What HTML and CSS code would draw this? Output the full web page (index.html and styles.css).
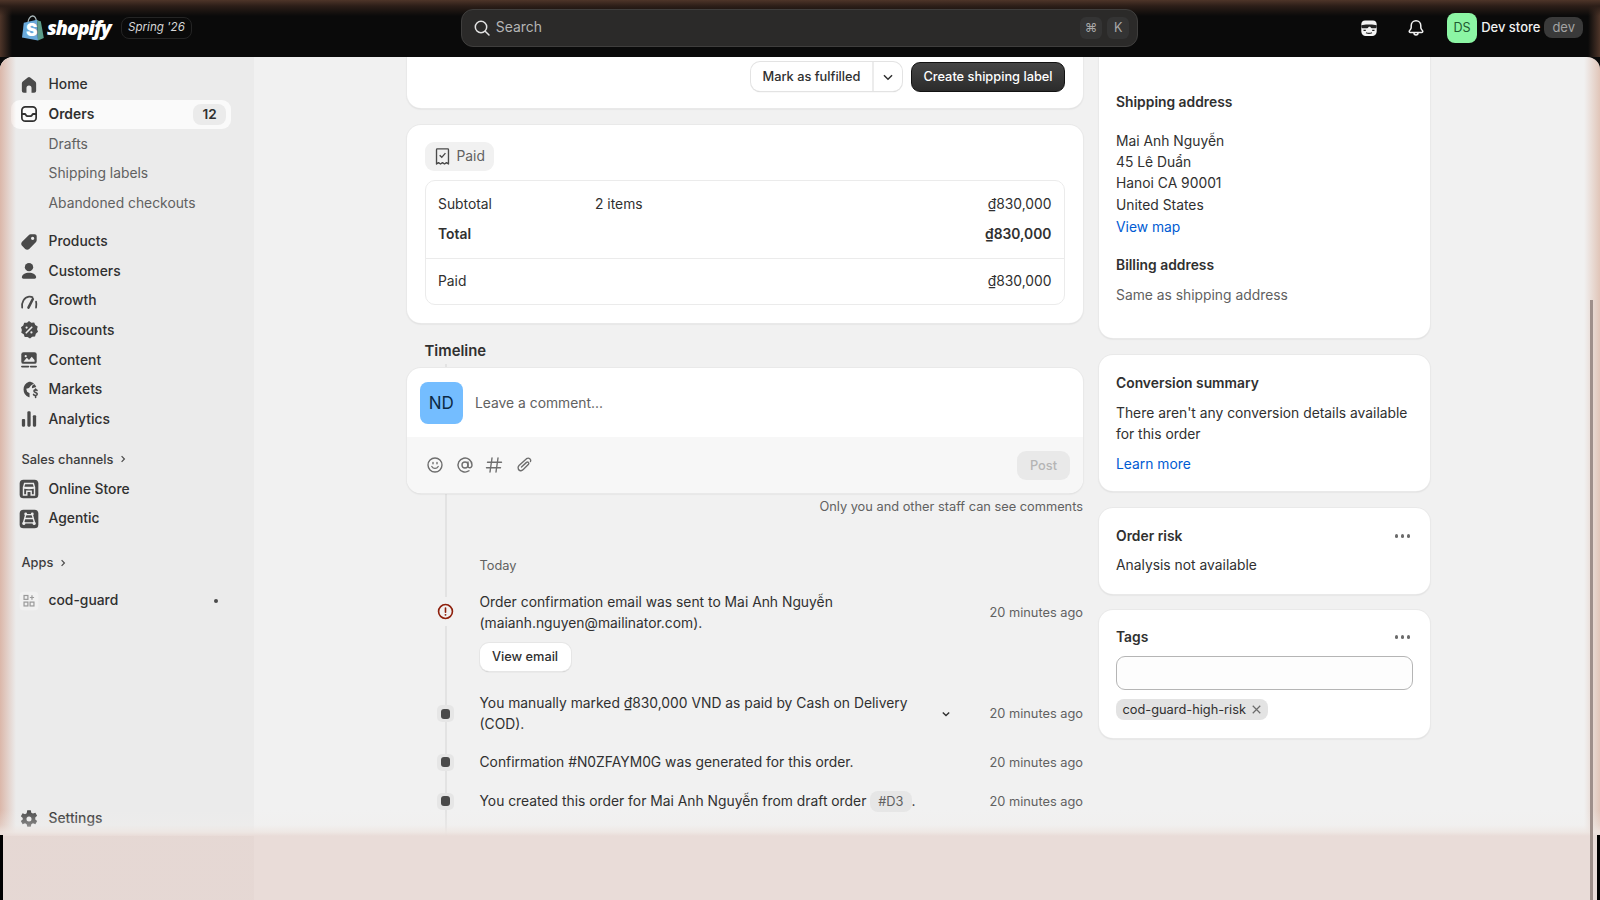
FILE: index.html
```html
<!DOCTYPE html>
<html lang="en">
<head>
  <meta charset="UTF-8">
  <meta name="viewport" content="width=device-width, initial-scale=1.0">
  <title>Order - Shopify</title>
  <link rel="stylesheet" href="styles.css">
</head>
<body>
  <header class="topbar">
    <div class="brand">
      <svg class="bag" viewBox="0 0 22 26" width="22" height="26">
        <path d="M6 8c0-3.500 2-6.800 4.500-7 2.200-.2 3.600 2.200 3.900 5.500" fill="none" stroke="#a9b6b8" stroke-width="1.300"/>
        <path d="M1.800 7.800 15 4.800 16 25.500 0 22.500z" fill="#6aa9da"/>
        <path d="M15 4.800l2 1.200 1.800.2L21.800 23 16 25.500z" fill="#5c9c8a"/>
        <text class="bag-s" x="4" y="20.500">S</text>
      </svg>
      <span class="wordmark">shopify</span>
      <span class="release">Spring '26</span>
    </div>
    <div class="search">
      <svg class="ic" viewBox="0 0 20 20" width="20" height="20"><circle cx="9" cy="9" r="5.700" fill="none" stroke="#e3e3e3" stroke-width="1.500"/><path d="M13.200 13.200 17 17" stroke="#e3e3e3" stroke-width="1.500" stroke-linecap="round"/></svg>
      <span class="search-text">Search</span>
      <span class="key">⌘</span>
      <span class="key">K</span>
    </div>
    <div class="top-actions">
      <svg class="mask" viewBox="0 0 20 20" width="20" height="20">
        <path d="M6 2.500h8c2.200 0 3.700 1.500 3.700 3.700v7.300c0 2.500-2 4.500-4.500 4.500H6.800c-2.500 0-4.500-2-4.500-4.500V6.200C2.300 4 3.800 2.500 6 2.500z" fill="#f4f4f4"/>
        <path d="M2.300 7.300l4.700-.8h6l4.700.8v1.400c0 .9-1 1.600-2 1.600h-2.200c-1 0-1.700-.5-2.100-1.300-.4-.4-1.400-.4-1.800 0-.4.800-1.100 1.300-2.100 1.300H4.300c-1 0-2-.7-2-1.600z" fill="#242424"/>
        <path d="M4.500 12.300h2.300M13.200 12.300h2.300M7 14.800c2 .8 4 .8 6 0" stroke="#242424" stroke-width="1.200" fill="none"/>
      </svg>
      <svg class="bell" viewBox="0 0 20 20" width="20" height="20" fill="none" stroke="#f1f1f1" stroke-width="1.500" stroke-linejoin="round">
        <path d="M10 2.800c-2.900 0-4.800 2.300-4.800 5v1.700c0 1.300-1.100 2.300-1.800 3.300-.5.800 0 1.700 1 1.700h11.200c1 0 1.500-.9 1-1.700-.7-1-1.800-2-1.800-3.300V7.800c0-2.700-1.900-5-4.800-5z"/>
        <path d="M8 15c0 2.500 4 2.500 4 0"/>
      </svg>
      <div class="store">
        <span class="store-avatar">DS</span>
        <span class="store-name">Dev store</span>
        <span class="store-tag">dev</span>
      </div>
    </div>
  </header>

  <div class="frame">
    <nav class="sidebar">
      <a class="nav-row"><svg class="ic" viewBox="0 0 20 20"><path d="M8.900 3.100a1.800 1.800 0 0 1 2.200 0l4.300 3.500c.7.500 1.100 1.300 1.100 2.200v6.400c0 1-.8 1.800-1.800 1.800h-2.400v-4.200a2.300 2.300 0 0 0-4.600 0V17H5.300c-1 0-1.800-.8-1.800-1.800V8.800c0-.9.400-1.700 1.100-2.200z"/></svg>Home</a>
      <a class="nav-row is-active"><svg class="ic ic-line" viewBox="0 0 20 20"><rect x="3.500" y="3.500" width="13" height="13" rx="3.200"/><path d="M3.500 10h2.400c.6 0 1 .3 1.200.8.300.8 1 1.200 1.700 1.200h2.400c.7 0 1.400-.4 1.700-1.200.2-.5.600-.8 1.200-.8h2.400"/></svg>Orders<span class="count">12</span></a>
      <a class="nav-row nav-sub">Drafts</a>
      <a class="nav-row nav-sub">Shipping labels</a>
      <a class="nav-row nav-sub">Abandoned checkouts</a>

      <a class="nav-row gap-s"><svg class="ic" viewBox="0 0 20 20"><path d="M11.500 3h3.700C16.200 3 17 3.800 17 4.800v3.700c0 .7-.3 1.300-.8 1.800l-6 6c-1 1-2.700 1-3.700 0l-2.800-2.800c-1-1-1-2.700 0-3.700l6-6c.5-.5 1.100-.8 1.800-.8zm1.800 2.200a1.500 1.500 0 1 0 0 3 1.500 1.500 0 0 0 0-3z" fill-rule="evenodd"/></svg>Products</a>
      <a class="nav-row"><svg class="ic" viewBox="0 0 20 20"><circle cx="10" cy="6.500" r="3.800"/><path d="M10 11.500c-3.600 0-6.500 1.800-6.500 4.200 0 .8.600 1.300 1.400 1.300h10.200c.8 0 1.400-.5 1.400-1.300 0-2.400-2.900-4.200-6.500-4.200z"/></svg>Customers</a>
      <a class="nav-row"><svg class="ic ic-line" viewBox="0 0 20 20"><path d="M3.800 16c-.8-4.600 1.800-9.600 6.200-10 1.200-.1 2.400.1 3.200.6"/><path d="M16.400 10.500c.5 1.900.4 3.800 0 5.500"/><path d="M9.500 16 13.500 8.200" stroke-width="2.300"/></svg>Growth</a>
      <a class="nav-row"><svg class="ic" viewBox="0 0 20 20"><path d="M10 1.800l2.100 1.500 2.600-.2 1 2.400 2.200 1.300-.6 2.500.9 2.400-2 1.700-.7 2.500-2.600.2-2 1.700-2.200-1.400-2.600-.1-.9-2.400-2.200-1.500.5-2.500-.8-2.500 2.100-1.500.8-2.500 2.600-.1z"/><path d="M7.500 12.500l5-5" stroke="#ebebeb" stroke-width="1.500" stroke-linecap="round"/><circle cx="7.800" cy="7.800" r="1" fill="#ebebeb"/><circle cx="12.200" cy="12.200" r="1" fill="#ebebeb"/></svg>Discounts</a>
      <a class="nav-row"><svg class="ic" viewBox="0 0 20 20"><rect x="3" y="3" width="14" height="10.500" rx="2"/><path d="M5 11.500 8 8l2 2 2.500-3 2.500 3v1.500z" fill="#ebebeb"/><circle cx="7" cy="6.500" r="1" fill="#ebebeb"/><path d="M3.500 16h6M11.500 16h5" stroke="#4a4a4a" stroke-width="1.500" stroke-linecap="round"/></svg>Content</a>
      <a class="nav-row"><svg class="ic" viewBox="0 0 20 20"><path d="M10 2.500c1.700 0 3.300.6 4.500 1.600l-2.700 1.700-1.800 2.400-2.500.6.800 2.700 2.200 1.500v3.500c-.2 0-.3.100-.5.100a7.500 7.500 0 0 1 0-14.100z"/><path d="M14.800 4.600c.8.800 1.400 1.700 1.800 2.700l-3.800 1.200c-.3-1-.1-1.900.4-2.600z"/><path d="M17.300 10.500c-.3-.9-2.800-1-2.800.5s3 1 3 2.700-2.900 1.600-3.400.3M16 9v1.300M16 15.300v1.500" fill="none" stroke="#4a4a4a" stroke-width="1.400" stroke-linecap="round"/></svg>Markets</a>
      <a class="nav-row"><svg class="ic" viewBox="0 0 20 20"><rect x="3.500" y="10" width="3" height="7" rx="1"/><rect x="8.500" y="3" width="3" height="14" rx="1"/><rect x="13.500" y="6.500" width="3" height="10.500" rx="1"/></svg>Analytics</a>

      <div class="nav-head first">Sales channels<svg viewBox="0 0 20 20" width="14" height="14" fill="none" stroke="#4a4a4a" stroke-width="1.700"><path d="M8 6l4 4-4 4"/></svg></div>
      <a class="nav-row"><svg class="ic tile" viewBox="0 0 20 20"><rect x="1.500" y="1.500" width="17" height="17" rx="3.500"/><path d="M5 8.500 6 5h8l1 3.500M5 8.500h10v7h-3v-3.500H8v3.500H5zM5 8.500c0 1.500 10 1.500 10 0" fill="none" stroke="#ebebeb" stroke-width="1.300"/></svg>Online Store</a>
      <a class="nav-row"><svg class="ic tile" viewBox="0 0 20 20"><rect x="1.500" y="1.500" width="17" height="17" rx="3.500"/><path d="M7 6h6l2 7.500H5zM6 9.500h8" fill="none" stroke="#ebebeb" stroke-width="1.300"/><circle cx="7" cy="5.500" r="1.300" fill="#ebebeb"/><circle cx="13" cy="5.500" r="1.300" fill="#ebebeb"/><circle cx="5.300" cy="14" r="1.400" fill="#ebebeb"/><circle cx="14.700" cy="14" r="1.400" fill="#ebebeb"/></svg>Agentic</a>

      <div class="nav-head second">Apps<svg viewBox="0 0 20 20" width="14" height="14" fill="none" stroke="#4a4a4a" stroke-width="1.700"><path d="M8 6l4 4-4 4"/></svg></div>
      <a class="nav-row app-row"><svg class="ic tile" viewBox="0 0 20 20"><rect x="1.500" y="1.500" width="17" height="17" rx="3.500" fill="#f1f1f1"/><g fill="none" stroke="#9a9a9a" stroke-width="1.100"><rect x="5.500" y="5" width="3.500" height="3.500"/><rect x="5.500" y="11" width="3.500" height="3.500"/><rect x="11" y="11" width="3.500" height="3.500"/><path d="M12.700 4.800v4M10.800 6.800h3.800"/></g></svg>cod-guard<span class="app-dot"></span></a>

      <a class="nav-row settings"><svg class="ic" viewBox="0 0 20 20"><path d="M8.400 2h3.200l.5 2.300 1.500.8 2.200-.8 1.600 2.800-1.700 1.500v1.800l1.700 1.500-1.600 2.800-2.200-.8-1.500.8-.5 2.300H8.400l-.5-2.300-1.500-.8-2.200.8-1.600-2.800 1.700-1.500V9.100L2.600 7.600l1.600-2.800 2.200.8 1.500-.8z"/><circle cx="10" cy="10" r="2.300" fill="#ebebeb"/></svg>Settings</a>
    </nav>

    <main class="content">
      <div class="col-main">
        <section class="card card-cut fulfil-card">
          <div class="btn-split">
            <span class="btn-part">Mark as fulfilled</span>
            <span class="btn-caret"><svg viewBox="0 0 20 20" width="18" height="18" fill="none" stroke="#303030" stroke-width="1.600"><path d="M5.500 8l4.500 4.500L14.500 8"/></svg></span>
          </div>
          <span class="btn-dark">Create shipping label</span>
        </section>

        <section class="card paid-card">
          <span class="paid-badge">
            <svg viewBox="0 0 20 20" width="21" height="21" fill="none" stroke="#4a4a4a" stroke-width="1.300"><path d="M5 2.800h10c.4 0 .7.300.7.700v13.700l-1.900-1.400-1.900 1.400-1.900-1.400-1.900 1.400-1.900-1.400-1.900 1.400V3.500c0-.4.300-.7.700-.7z" stroke-linejoin="round"/><path d="M7.300 8.800l2 2 3.500-4"/></svg>
            Paid
          </span>
          <div class="summary">
            <div class="sum-row"><span class="sum-label">Subtotal</span><span>2 items</span><span class="sum-val">₫830,000</span></div>
            <div class="sum-row strong"><span class="sum-label">Total</span><span></span><span class="sum-val">₫830,000</span></div>
            <div class="sum-row paid-row"><span class="sum-label">Paid</span><span></span><span class="sum-val">₫830,000</span></div>
          </div>
        </section>

        <h2 class="tl-title">Timeline</h2>

        <div class="timeline">
          <section class="card comment-card">
            <div class="comment-top">
              <span class="user-avatar">ND</span>
              <span class="comment-hint">Leave a comment...</span>
            </div>
            <div class="comment-bar">
              <svg class="tool" viewBox="0 0 20 20"><circle cx="10" cy="10" r="7"/><path d="M6.800 11.500c1.500 2.500 4.900 2.500 6.400 0"/><path d="M8 7.500v1.300M12 7.500v1.300"/></svg>
              <svg class="tool" viewBox="0 0 20 20"><circle cx="10" cy="10" r="3"/><path d="M13 7v4.300c0 2.300 4 2 4-1.300a7 7 0 1 0-3 5.800"/></svg>
              <svg class="tool" viewBox="0 0 20 20"><path d="M8 3l-2 14M14 3l-2 14M3.500 7.300h14M2.500 12.700h14"/></svg>
              <svg class="tool" viewBox="0 0 20 20"><path d="M16.500 6.500c1-2-1.500-4.500-4-2.800L5 10.500c-2 2-.5 6 2.500 5 .8-.3 1.300-.7 2-1.300l5-5c1-1.200-.5-3-2-1.800L7.500 12"/></svg>
              <span class="post-btn">Post</span>
            </div>
          </section>
          <p class="comment-note">Only you and other staff can see comments</p>

          <p class="tl-day">Today</p>

          <div class="event first-event">
            <div class="marker">
              <svg class="warn" viewBox="0 0 20 20" width="19" height="19" fill="none" stroke="#8e1f0b" stroke-width="1.700"><circle cx="10" cy="10" r="7.300"/><path d="M10 6.300v4.400" stroke-linecap="round"/><circle cx="10" cy="13.500" r="1" fill="#8e1f0b" stroke="none"/></svg>
            </div>
            <div class="event-body">
              <p>Order confirmation email was sent to Mai Anh Nguyễn (maianh.nguyen@mailinator.com).</p>
              <span class="btn-plain">View email</span>
            </div>
            <time class="event-time">20 minutes ago</time>
          </div>

          <div class="event second-event">
            <div class="marker"><span class="dot"></span></div>
            <div class="event-body"><p>You manually marked ₫830,000 VND as paid by Cash on Delivery (COD).</p></div>
            <svg class="event-caret" viewBox="0 0 20 20" width="16" height="16" fill="none" stroke="#303030" stroke-width="1.700"><path d="M6 8l4 4 4-4"/></svg>
            <time class="event-time">20 minutes ago</time>
          </div>

          <div class="event third-event">
            <div class="marker"><span class="dot"></span></div>
            <div class="event-body"><p>Confirmation #N0ZFAYM0G was generated for this order.</p></div>
            <time class="event-time">20 minutes ago</time>
          </div>

          <div class="event fourth-event">
            <div class="marker"><span class="dot"></span></div>
            <div class="event-body"><p class="nowrap">You created this order for Mai Anh Nguyễn from draft order <span class="draft-pill">#D3</span>.</p></div>
            <time class="event-time">20 minutes ago</time>
          </div>
        </div>
      </div>

      <aside class="col-side">
        <section class="card card-cut address-card">
          <h3 class="card-title">Shipping address</h3>
          <p class="address">Mai Anh Nguyễn<br>45 Lê Duẩn<br>Hanoi CA 90001<br>United States</p>
          <a class="link">View map</a>
          <h3 class="card-title billing">Billing address</h3>
          <p class="muted">Same as shipping address</p>
        </section>

        <section class="card pad-card conv-card">
          <h3 class="card-title">Conversion summary</h3>
          <p class="conv-text">There aren't any conversion details available for this order</p>
          <a class="link learn">Learn more</a>
        </section>

        <section class="card pad-card risk-card">
          <div class="title-row"><h3 class="card-title">Order risk</h3><span class="dots"><i></i><i></i><i></i></span></div>
          <p class="risk-text">Analysis not available</p>
        </section>

        <section class="card pad-card tags-card">
          <div class="title-row"><h3 class="card-title">Tags</h3><span class="dots"><i></i><i></i><i></i></span></div>
          <div class="tag-input"></div>
          <span class="tag">cod-guard-high-risk
            <svg viewBox="0 0 20 20" width="15" height="15" fill="none" stroke="#6b6b6b" stroke-width="1.600"><path d="M5 5l10 10M15 5L5 15"/></svg>
          </span>
        </section>
      </aside>
    </main>

    <div class="edge-left"></div>
    <div class="edge-right"></div>
    <div class="scroll-thumb"></div>
    <div class="bottom-haze"></div>
  </div>
</body>
</html>
```

FILE: styles.css
```css
* {
  box-sizing: border-box;
}

body {
  margin: 0;
  height: 100vh;
  display: flex;
  flex-direction: column;
  overflow: hidden;
  background: #0a0a0a;
  color: #303030;
  font-family: Inter, "Noto Sans", sans-serif;
  font-size: 13.85px;
  line-height: 21px;
}

p, h2, h3 {
  margin: 0;
}

/* top bar */
.topbar {
  height: 57px;
  flex: none;
  display: flex;
  align-items: center;
  padding: 0 17px 2px 22px;
  background:
    linear-gradient(to bottom, #4e3529 0, #2c1e18 6px, rgba(10,10,10,0) 16px),
    linear-gradient(to right, #4e3529 0, rgba(10,10,10,0) 12px),
    linear-gradient(to left, #4e3529 0, rgba(10,10,10,0) 12px),
    #0a0a0a;
}

.brand {
  width: 440px;
  display: flex;
  align-items: center;
}

.bag-s {
  font: 900 17px Inter, sans-serif;
  fill: #fff;
}

.wordmark {
  margin-left: 3px;
  width: 65px;
  color: #fff;
  font-family: "Open Sans", sans-serif;
  font-size: 19.5px;
  font-style: italic;
  font-weight: 800;
  letter-spacing: -1px;
}

.release {
  height: 22px;
  margin-left: 9px;
  padding: 0 6px;
  display: flex;
  align-items: center;
  border: 1px solid #242424;
  border-radius: 8px;
  color: #d6d6d6;
  font-size: 11.6px;
  font-style: italic;
}

.search {
  width: 679px;
  height: 38px;
  display: flex;
  align-items: center;
  padding: 0 8px 0 10px;
  gap: 4px;
  background: #2b2a29;
  border: 1px solid #3f3e3d;
  border-radius: 12px;
}

.search-text {
  flex: 1;
  color: #b5b5b5;
  font-size: 13.9px;
}

.key {
  width: 22px;
  height: 22px;
  display: flex;
  align-items: center;
  justify-content: center;
  margin-left: 1px;
  background: #343434;
  border-radius: 6px;
  color: #a8a8a8;
  font-size: 12.6px;
}

.top-actions {
  flex: 1;
  display: flex;
  align-items: center;
}

.mask {
  margin-left: 221px;
}

.bell {
  margin-left: 27px;
}

.store {
  margin-left: 21px;
  display: flex;
  align-items: center;
}

.store-avatar {
  width: 30px;
  height: 30px;
  display: flex;
  align-items: center;
  justify-content: center;
  background: #8cf5a4;
  border-radius: 8px;
  color: #1e5a30;
  font-size: 12.6px;
}

.store-name {
  margin-left: 4px;
  color: #f1f1f1;
  font-weight: 500;
  font-size: 13px;
  white-space: nowrap;
}

.store-tag {
  margin-left: 4px;
  height: 21px;
  padding: 0 8px;
  display: flex;
  align-items: center;
  background: #3a3a3a;
  border-radius: 8px;
  color: #a3a3a3;
  font-size: 13px;
}

/* frame */
.frame {
  position: relative;
  flex: 1;
  min-height: 0;
  display: flex;
  background: #f1f1f1;
  border-radius: 13px 13px 0 0;
  overflow: hidden;
}

.sidebar {
  width: 254px;
  flex: none;
  display: flex;
  flex-direction: column;
  padding: 13px 23px 66.5px 11px;
  background: #ebebeb;
}

.nav-row {
  height: 29.65px;
  flex: none;
  display: flex;
  align-items: center;
  padding-left: 7px;
  border-radius: 9px;
  color: #303030;
  font-weight: 500;
}

.nav-row .ic {
  width: 22px;
  height: 22px;
  margin-right: 8.500px;
  fill: #4a4a4a;
}

.nav-row .ic-line {
  fill: none;
  stroke: #4a4a4a;
  stroke-width: 1.600;
  stroke-linecap: round;
}

.is-active .ic-line {
  stroke: #303030;
}

.is-active {
  background: #fafafa;
  font-weight: 600;
}

.count {
  margin-left: auto;
  margin-right: 5px;
  width: 33px;
  height: 21px;
  display: flex;
  align-items: center;
  justify-content: center;
  background: #ebebeb;
  border-radius: 8px;
  font-size: 13.6px;
}

.nav-sub {
  padding-left: 37.5px;
  color: #616161;
  font-weight: 430;
}

.gap-s {
  margin-top: 8.5px;
}

.nav-head {
  height: 29.6px;
  flex: none;
  display: flex;
  align-items: center;
  gap: 3px;
  padding-left: 10.5px;
  color: #3d3d3d;
  font-size: 12.8px;
  font-weight: 500;
}

.nav-head.first {
  margin-top: 10.5px;
}

.nav-head.second {
  margin-top: 14.3px;
  margin-bottom: 8.4px;
}

.app-dot {
  margin-left: auto;
  margin-right: 13px;
  width: 4px;
  height: 4px;
  background: #4a4a4a;
  border-radius: 50%;
}

.settings {
  margin-top: auto;
}

/* content columns */
.content {
  flex: 1;
  display: grid;
  grid-template-columns: 676px 331px;
  gap: 16px;
  align-content: start;
  padding-left: 153px;
}

.card {
  background: #fff;
  border-radius: 14px;
  box-shadow: 0 0 0 1px #e9e9e9, 0 1px 2px rgba(0,0,0,.14);
}

.card-cut {
  border-radius: 0 0 14px 14px;
}

.fulfil-card {
  height: 51px;
  display: flex;
  justify-content: flex-end;
  gap: 9px;
  padding: 5px 18px 0 0;
}

.btn-split {
  height: 29px;
  display: flex;
  background: #fff;
  border-radius: 9px;
  box-shadow: 0 0 0 1px #e3e3e3, 0 1px 1px rgba(0,0,0,.25);
  font-size: 12.8px;
  font-weight: 500;
}

.btn-part {
  width: 123px;
  display: flex;
  align-items: center;
  justify-content: center;
  border-right: 2px solid #ececec;
}

.btn-caret {
  width: 28px;
  display: flex;
  align-items: center;
  justify-content: center;
}

.btn-dark {
  width: 154px;
  height: 30px;
  padding-bottom: 1px;
  display: flex;
  align-items: center;
  justify-content: center;
  background: linear-gradient(#454545, #2b2b2b);
  border: 1px solid #121212;
  border-radius: 9px;
  color: #fff;
  font-size: 12.8px;
  font-weight: 500;
}

.paid-card {
  margin-top: 17px;
  padding: 17px 18px 18px 17.5px;
}

.paid-badge {
  width: 69px;
  height: 29px;
  display: flex;
  align-items: center;
  gap: 4px;
  padding-left: 7px;
  background: #f1f1f1;
  border-radius: 9px;
  color: #616161;
  font-weight: 430;
}

.summary {
  margin-top: 9px;
  height: 125px;
  padding-top: 9px;
  border: 1px solid #ebebeb;
  border-radius: 10px;
}

.sum-row {
  height: 29.6px;
  display: grid;
  grid-template-columns: 157px 1fr auto;
  align-items: center;
  padding: 0 12.5px;
  font-weight: 430;
}

.sum-row.strong {
  font-weight: 570;
}

.sum-row.paid-row {
  height: 47px;
  margin-top: 8.5px;
  border-top: 1px solid #ebebeb;
}

.tl-title {
  padding: 19px 0 8px 17.5px;
  font-size: 14.9px;
  line-height: 18px;
  font-weight: 600;
}

.timeline {
  position: relative;
}

.timeline::before {
  content: "";
  position: absolute;
  left: 37.5px;
  top: -4px;
  bottom: -30px;
  width: 2px;
  background: #e3e3e3;
}

.comment-card {
  position: relative;
  height: 125px;
  overflow: hidden;
  display: flex;
  flex-direction: column;
}

.comment-top {
  height: 69px;
  flex: none;
  display: flex;
  align-items: center;
  padding: 1px 0 0 13px;
  gap: 12.5px;
}

.user-avatar {
  width: 42.5px;
  height: 42.5px;
  display: flex;
  align-items: center;
  justify-content: center;
  background: #74bdff;
  border-radius: 8px;
  color: #0c2a45;
  font-size: 17px;
}

.comment-hint {
  color: #616161;
}

.comment-bar {
  flex: 1;
  display: flex;
  align-items: center;
  gap: 9.5px;
  padding: 0 13px 0 18px;
  background: #f7f7f7;
}

.tool {
  width: 20px;
  height: 20px;
  fill: none;
  stroke: #6e6e6e;
  stroke-width: 1.400;
  stroke-linecap: round;
}

.post-btn {
  margin-left: auto;
  width: 53px;
  height: 29px;
  display: flex;
  align-items: center;
  justify-content: center;
  background: #e9e9e9;
  border-radius: 9px;
  color: #b5b5b5;
  font-size: 12.8px;
  font-weight: 500;
}

.comment-note {
  position: relative;
  margin-top: 4.5px;
  line-height: 18px;
  text-align: right;
  color: #616161;
  font-size: 12.8px;
  font-weight: 430;
}

.tl-day {
  position: relative;
  margin-top: 41.5px;
  padding-left: 72.5px;
  line-height: 18px;
  color: #616161;
  font-size: 12.8px;
}

.event {
  position: relative;
  display: flex;
  align-items: flex-start;
}

.first-event {
  margin-top: 17px;
}

.second-event {
  margin-top: 22px;
}

.third-event {
  margin-top: 17px;
}

.fourth-event {
  margin-top: 18px;
}

.marker {
  width: 72.5px;
  flex: none;
  height: 42px;
  display: flex;
  align-items: center;
  padding-left: 29px;
}

.first-event .marker {
  margin-top: -2px;
}

.first-event .event-time {
  margin-top: -1px;
}

.third-event .marker,
.fourth-event .marker {
  height: 21px;
}

.warn {
  background: #f1f1f1;
  box-shadow: 0 -5px 0 #f1f1f1, 0 5px 0 #f1f1f1;
}

.dot {
  width: 17px;
  height: 17px;
  margin-left: 1px;
  display: flex;
  align-items: center;
  justify-content: center;
  background: #e6e6e6;
  border-radius: 5px;
}

.dot::after {
  content: "";
  width: 9px;
  height: 10px;
  background: #4a4a4a;
  border-radius: 3px;
}

.event-body {
  width: 458px;
  flex: none;
  font-weight: 430;
}

.event-caret {
  margin-top: 13px;
}

.event-time {
  margin-left: auto;
  height: 42px;
  display: flex;
  align-items: center;
  color: #616161;
  font-size: 12.8px;
  font-weight: 430;
}

.third-event .event-time,
.fourth-event .event-time {
  height: 21px;
}

.nowrap {
  white-space: nowrap;
}

.btn-plain {
  width: 91px;
  height: 28px;
  margin-top: 8.5px;
  padding-bottom: 1px;
  display: flex;
  align-items: center;
  justify-content: center;
  background: #fff;
  border-radius: 9px;
  box-shadow: 0 0 0 1px #e6e6e6, 0 1px 1px rgba(0,0,0,.3);
  font-size: 12.8px;
  font-weight: 500;
}

.draft-pill {
  display: inline-block;
  height: 21px;
  padding: 0 8px;
  background: #e6e6e6;
  border-radius: 8px;
  color: #616161;
  font-size: 12.8px;
}

/* side column */
.address-card {
  height: 281px;
  padding: 35px 17px 0;
}

.card-title {
  font-size: 13.85px;
  font-weight: 600;
  line-height: 21px;
}

.address {
  margin-top: 18px;
  line-height: 21.2px;
}

.address, .conv-text, .risk-text, .muted {
  font-weight: 430;
}

.link {
  display: block;
  color: #005bd3;
  font-weight: 430;
  line-height: 22px;
}

.billing {
  margin-top: 17px;
}

.muted {
  margin-top: 9px;
  color: #616161;
}

.pad-card {
  margin-top: 17px;
  padding: 17px 17px 17.5px;
}

.conv-card {
  padding-top: 18px;
  padding-bottom: 16px;
}

.conv-text {
  margin-top: 8.500px;
}

.learn {
  margin-top: 8.500px;
}

.title-row {
  display: flex;
  align-items: center;
  justify-content: space-between;
}

.risk-card {
  padding-top: 17.500px;
  padding-bottom: 18px;
}

.risk-text {
  margin-top: 8.500px;
}

.dots {
  display: flex;
  gap: 2.500px;
  margin-right: 3px;
}

.dots i {
  width: 3.500px;
  height: 3.500px;
  background: #6b6b6b;
  border-radius: 50%;
}

.tags-card {
  margin-top: 16px;
  padding-top: 16.500px;
  height: 128px;
}

.tag-input {
  margin-top: 8.500px;
  height: 34px;
  background: #fdfdfd;
  border: 1px solid #b5b5b5;
  border-radius: 9px;
}

.tag {
  margin-top: 9px;
  width: 152px;
  height: 21px;
  display: flex;
  align-items: center;
  justify-content: space-between;
  padding: 0 4px 0 6.500px;
  background: #e3e3e3;
  border-radius: 8px;
  font-size: 12.8px;
  font-weight: 430;
  white-space: nowrap;
}

/* window glass on the edges */
.edge-left,
.edge-right {
  position: absolute;
  top: 0;
  bottom: 0;
  width: 16px;
  pointer-events: none;
}

.edge-left {
  left: 0;
  background: linear-gradient(to right, rgba(217,176,160,.88), rgba(217,176,160,0));
}

.edge-right {
  right: 0;
  background: linear-gradient(to left, rgba(222,190,175,.85), rgba(222,190,175,0));
}

.scroll-thumb {
  position: absolute;
  z-index: 3;
  right: 7px;
  top: 243px;
  bottom: 0;
  width: 3px;
  background: #9e8f8a;
}

.bottom-haze {
  position: absolute;
  z-index: 2;
  left: 0;
  right: 0;
  bottom: 0;
  height: 90px;
  background:
    linear-gradient(to right, rgba(120,90,80,.03) 254px, transparent 254px) 0 26px no-repeat,
    linear-gradient(to bottom, rgba(240,238,236,0) 0, rgba(240,238,236,.35) 15px, rgba(238,230,226,.85) 22px, #e9dcd8 26px);
}

.bottom-haze::after {
  content: "";
  position: absolute;
  left: 0;
  right: 0;
  top: 25px;
  bottom: 0;
  border-left: 3px solid #000;
  border-right: 3px solid #000;
}
```
